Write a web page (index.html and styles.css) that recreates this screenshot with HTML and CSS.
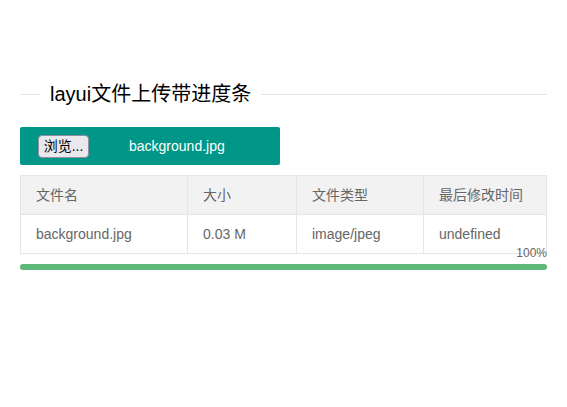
FILE: index.html
```html
<!DOCTYPE html>
<html lang="zh-CN">
<head>
<meta charset="utf-8">
<title>layui文件上传带进度条</title>
<link rel="stylesheet" href="styles.css">
</head>
<body>
<div class="page">
  <div class="field-title">
    <span class="rule rule-left"></span>
    <span class="legend">layui文件上传带进度条</span>
    <span class="rule rule-right"></span>
  </div>
  <div class="upload-box">
    <span class="file-btn">浏览...</span>
    <span class="file-name">background.jpg</span>
  </div>
  <table class="file-table">
    <thead>
      <tr>
        <th class="c1">文件名</th>
        <th class="c2">大小</th>
        <th class="c3">文件类型</th>
        <th class="c4">最后修改时间</th>
      </tr>
    </thead>
    <tbody>
      <tr>
        <td>background.jpg</td>
        <td>0.03 M</td>
        <td>image/jpeg</td>
        <td>undefined</td>
      </tr>
    </tbody>
  </table>
  <div class="progress">
    <div class="progress-bar" style="width:100%"></div>
    <span class="progress-text">100%</span>
  </div>
</div>
</body>
</html>
```
FILE: styles.css
```css
html, body {
  margin: 0;
  padding: 0;
  background: #fff;
}
body {
  font-family: "Liberation Sans", Arial, "Noto Sans CJK SC", sans-serif;
  color: #333;
}
.page {
  padding: 80px 20px 0 20px;
}
.field-title {
  display: flex;
  align-items: center;
  height: 28px;
}
.rule {
  height: 1px;
  background: #e6e6e6;
}
.rule-left {
  width: 20px;
}
.rule-right {
  flex: 1;
}
.legend {
  padding: 0 10px;
  font-size: 20px;
  line-height: 28px;
  font-weight: 400;
  color: #000;
}
.upload-box {
  margin-top: 19px;
  width: 260px;
  height: 38px;
  background: #009688;
  border-radius: 2px;
  display: flex;
  align-items: center;
  box-sizing: border-box;
  padding-left: 18px;
}
.file-btn {
  box-sizing: border-box;
  width: 51px;
  height: 23px;
  background: #e9e9ed;
  border: 1px solid #8f8f9d;
  border-radius: 4px;
  font-size: 14px;
  line-height: 21px;
  color: #000;
  text-align: center;
  padding: 0 2px;
  white-space: nowrap;
}
.file-name {
  margin-left: 40px;
  color: #fff;
  font-size: 14px;
  line-height: 20px;
}
.file-table {
  margin-top: 10px;
  width: 100%;
  border-collapse: collapse;
  border-spacing: 0;
  color: #666;
  font-size: 14px;
}
.file-table th,
.file-table td {
  border: 1px solid #e6e6e6;
  padding: 9px 15px;
  line-height: 20px;
  text-align: left;
  font-weight: 400;
}
.file-table thead tr {
  background: #f2f2f2;
}
.c1 { width: 136px; }
.c2 { width: 78px; }
.c3 { width: 96px; }
.progress {
  position: relative;
  margin-top: 10px;
  height: 6px;
  border-radius: 20px;
  background: #e2e2e2;
}
.progress-bar {
  height: 6px;
  border-radius: 20px;
  background: #5fb878;
}
.progress-text {
  position: absolute;
  right: 0;
  top: -20px;
  font-size: 12px;
  line-height: 18px;
  color: #666;
}
```
